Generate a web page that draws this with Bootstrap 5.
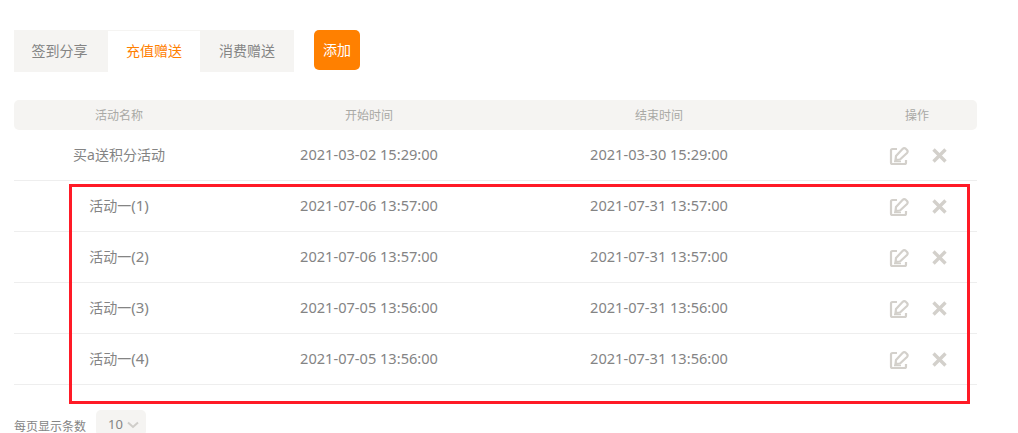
<!DOCTYPE html>
<html lang="zh"><head><meta charset="utf-8">
<link href="https://cdn.jsdelivr.net/npm/bootstrap@5.3.0/dist/css/bootstrap.min.css" rel="stylesheet">
<style>
html,body{height:433px;overflow:hidden}
body{background:#fff;color:#848484;font-family:"Noto Sans","Noto Sans CJK SC",sans-serif;font-size:14px;position:relative}
.pane{padding:30px 41px 0 14px}
.tabbar{gap:20px;margin-bottom:28px}
.tabset{height:42px}
.tabset button{background:#f5f4f2;border:0;height:42px;font-size:14px;color:#848484;padding:0 0 2px;width:94px;border-radius:0}
.tabset button:first-child{padding-right:3px}
.tabset button.on{background:#fff;color:#ff8000;width:92px;border-top:1px solid #f5f4f2}
.addbtn{background:#ff8000;color:#fff;border:0;width:46px;height:40px;padding:0 0 2px;font-size:14px;border-radius:5px}
.addbtn:hover{background:#ff8000;color:#fff}
.datatable{table-layout:fixed;width:963px;margin:0;--bs-table-color:#848484;--bs-table-border-color:#eeeeee}
.datatable th{background:#f5f4f2;color:#a9a9a5;font-weight:400;font-size:12px;height:30px;padding:2px 0 0;text-align:center;border:0;vertical-align:middle}
.datatable th:first-child{border-radius:5px 0 0 5px}
.datatable th:last-child{border-radius:0 5px 5px 0;padding-left:53px}
.datatable td{height:51px;padding:0;text-align:center;vertical-align:middle;color:#848484;font-size:14px}
.datatable tbody tr:first-child td{height:50px}
.datatable .timecell{font-size:14.6px}
.seqno{font-size:15px}
.optcell{gap:23px;padding-left:85px;margin-top:2px}
.pagerline{gap:10px;margin-top:25px;font-size:12px}
.pagerlabel{margin-top:8px}
.sizepick{background:#f5f4f2;width:50px;height:26px;border-radius:5px;gap:4px;padding:5px 0 0 12px;font-size:13px}
.redframe{position:absolute;left:69px;top:184px;width:901px;height:220px;border:3px solid #ff1a26;pointer-events:none}
</style></head><body>
<div class="pane">
<div class="d-flex tabbar align-items-start">
<div class="d-flex tabset"><button class="btn">签到分享</button><button class="btn on">充值赠送</button><button class="btn">消费赠送</button></div>
<button class="btn addbtn">添加</button>
</div>
<table class="table datatable"><colgroup><col style="width:210px"><col style="width:290px"><col style="width:290px"><col></colgroup>
<thead><tr><th>活动名称</th><th>开始时间</th><th>结束时间</th><th>操作</th></tr></thead>
<tbody id="rows"></tbody></table>
<div class="d-flex pagerline align-items-start"><span class="pagerlabel">每页显示条数</span><div class="sizepick d-flex align-items-start"><span>10</span><svg width="12" height="12" viewBox="0 0 12 12" class="mt-1"><path d="M1 3.500 6 8 11 3.500" fill="none" stroke="#cfcdc9" stroke-width="2"/></svg></div></div>
</div>
<div class="redframe"></div>
<script>
const d=[["买a送积分活动","2021-03-02 15:29:00","2021-03-30 15:29:00"],["活动一<span class='seqno'>(1)</span>","2021-07-06 13:57:00","2021-07-31 13:57:00"],["活动一<span class='seqno'>(2)</span>","2021-07-06 13:57:00","2021-07-31 13:57:00"],["活动一<span class='seqno'>(3)</span>","2021-07-05 13:56:00","2021-07-31 13:56:00"],["活动一<span class='seqno'>(4)</span>","2021-07-05 13:56:00","2021-07-31 13:56:00"]];
const ic='<div class="d-flex optcell align-items-center"><svg width="20" height="20" viewBox="0 0 20 20" fill="none" stroke="#d3d0cb" stroke-width="2.200"><path d="M8 3H3.500Q2 3 2 4.500V16.500Q2 18 3.500 18H15.500Q17 18 17 16.500V14"/><path d="M6.500 14 7 10 13.500 3Q15 1.500 16.500 2.500L18 4Q19.300 5.500 18 7L11 13.500Z"/><path d="M5 15.500H12" stroke-width="1.500"/></svg><svg width="15" height="15" viewBox="0 0 15 15" stroke="#d3d0cb" stroke-width="3.400"><path d="M1.500 1.500 13.500 13.500M13.500 1.500 1.500 13.500"/></svg></div>';
document.getElementById('rows').innerHTML=d.map(r=>`<tr><td>${r[0]}</td><td class="timecell">${r[1]}</td><td class="timecell">${r[2]}</td><td>${ic}</td></tr>`).join('');
</script>
<script src="https://cdn.jsdelivr.net/npm/bootstrap@5.3.0/dist/js/bootstrap.bundle.min.js"></script>
</body></html>
